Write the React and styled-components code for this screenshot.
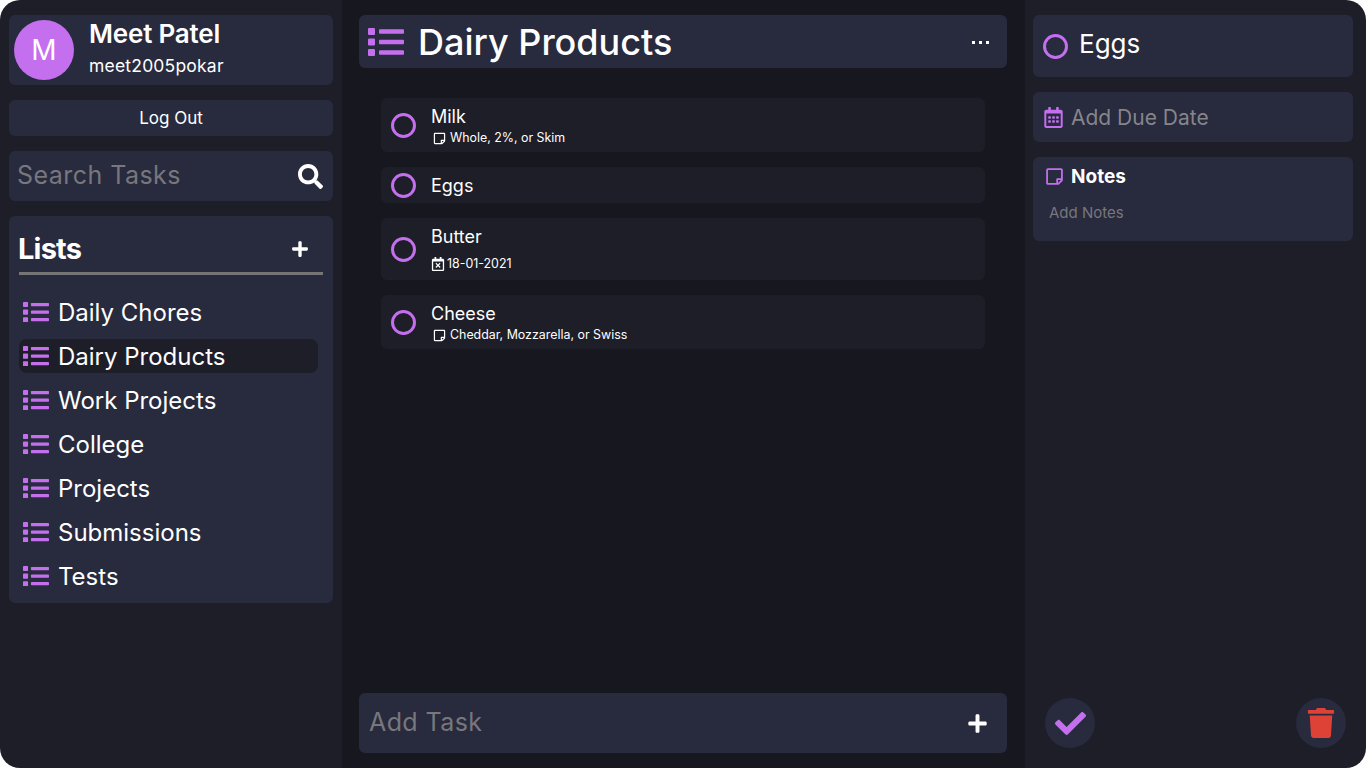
import styled, { createGlobalStyle } from "styled-components"
import { FaSearch, FaPlus, FaCheck, FaTrash, FaRegStickyNote, FaRegCalendarAlt, FaRegCalendarTimes } from "react-icons/fa"

const PURPLE = "#c36fee"
const PANEL = "#282a3e"
const SIDE = "#1e1e28"
const MAIN = "#17171f"
const MUTED = "#77777c"

const GlobalStyle = createGlobalStyle`
  html, body { margin: 0; padding: 0; background: #fff; }
  * { box-sizing: border-box; }
  body { font-family: Inter, "Noto Sans", sans-serif; color: #fff; }
`

const ListIcon = ({ size }) => (
  <ListSvg viewBox="0 0 36 28" $size={size}>
    <rect x="0" y="0" width="7" height="7" rx="1" />
    <rect x="0" y="10.5" width="7" height="7" rx="1" />
    <rect x="0" y="21" width="7" height="7" rx="1" />
    <rect x="11" y="1.25" width="25" height="4.5" rx="1" />
    <rect x="11" y="11.75" width="25" height="4.5" rx="1" />
    <rect x="11" y="22.25" width="25" height="4.5" rx="1" />
  </ListSvg>
)

const lists = ["Daily Chores", "Dairy Products", "Work Projects", "College", "Projects", "Submissions", "Tests"]

const tasks = [
  { name: "Milk", note: "Whole, 2%, or Skim" },
  { name: "Eggs" },
  { name: "Butter", date: "18-01-2021" },
  { name: "Cheese", note: "Cheddar, Mozzarella, or Swiss" },
]

export default function App() {
  return (
    <Page>
      <GlobalStyle />
      <Sidebar>
        <Profile>
          <Avatar>M</Avatar>
          <div>
            <UserName>Meet Patel</UserName>
            <UserHandle>meet2005pokar</UserHandle>
          </div>
        </Profile>
        <LogOut>Log Out</LogOut>
        <Search>
          <SearchLabel>Search Tasks</SearchLabel>
          <FaSearch size={25} />
        </Search>
        <ListsCard>
          <ListsHead>
            <ListsTitle>Lists</ListsTitle>
            <FaPlus size={18} />
          </ListsHead>
          <ListRows>
            {lists.map(l => (
              <ListRow key={l} $active={l === "Dairy Products"}>
                <ListIcon size={26} />
                {l}
              </ListRow>
            ))}
          </ListRows>
        </ListsCard>
      </Sidebar>

      <Main>
        <Header>
          <ListIcon size={36} />
          <Title>Dairy Products</Title>
          <Dots>
            <i /><i /><i />
          </Dots>
        </Header>
        <Tasks>
          {tasks.map(t => (
            <Task key={t.name}>
              <Ring />
              <TaskBody $tall={!!t.date}>
                <TaskName>{t.name}</TaskName>
                {t.note && (
                  <TaskMeta $indent>
                    <FaRegStickyNote size={13} />
                    {t.note}
                  </TaskMeta>
                )}
                {t.date && (
                  <TaskMeta $date>
                    <FaRegCalendarTimes size={14} />
                    {t.date}
                  </TaskMeta>
                )}
              </TaskBody>
            </Task>
          ))}
        </Tasks>
        <AddTask>
          <AddLabel>Add Task</AddLabel>
          <FaPlus size={21} />
        </AddTask>
      </Main>

      <Details>
        <DetailTitle>
          <Ring />
          <DetailName>Eggs</DetailName>
        </DetailTitle>
        <DueDate>
          <FaRegCalendarAlt size={21} color={PURPLE} />
          <span>Add Due Date</span>
        </DueDate>
        <Notes>
          <NotesHead>
            <FaRegStickyNote size={19} color={PURPLE} />
            <span>Notes</span>
          </NotesHead>
          <NotesHint>Add Notes</NotesHint>
        </Notes>
        <Actions>
          <RoundButton><FaCheck size={31} color={PURPLE} /></RoundButton>
          <RoundButton><FaTrash size={30} color="#de4237" /></RoundButton>
        </Actions>
      </Details>
    </Page>
  )
}

const Page = styled.div`
  width: 1366px;
  height: 768px;
  display: grid;
  grid-template-columns: 342px 683px 341px;
  border-radius: 20px;
  overflow: hidden;
`
const ListSvg = styled.svg`
  width: ${props => props.$size}px;
  flex: none;
  fill: ${PURPLE};
`
const Sidebar = styled.aside`
  background: ${SIDE};
  padding: 15px 9px;
  display: flex;
  flex-direction: column;
  gap: 15px;
`
const Card = styled.div`
  background: ${PANEL};
  border-radius: 6px;
`
const Profile = styled(Card)`
  height: 70px;
  display: flex;
  align-items: center;
  gap: 15px;
  padding-left: 5px;
`
const Avatar = styled.div`
  width: 60px;
  height: 60px;
  border-radius: 50%;
  background: ${PURPLE};
  display: flex;
  align-items: center;
  justify-content: center;
  font-size: 28px;
`
const UserName = styled.div`
  font-size: 26px;
  font-weight: 600;
  line-height: 36px;
  margin: -5px 0 1px;
  letter-spacing: -0.2px;
`
const UserHandle = styled.div`
  font-size: 17.5px;
  line-height: 26px;
  letter-spacing: 0.2px;
`
const LogOut = styled(Card)`
  height: 36px;
  display: flex;
  align-items: center;
  justify-content: center;
  font-size: 17px;
`
const Search = styled(Card)`
  height: 50px;
  display: flex;
  align-items: center;
  justify-content: space-between;
  padding: 0 10px 0 8px;
`
const SearchLabel = styled.span`
  font-size: 25px;
  color: ${MUTED};
  letter-spacing: 0.45px;
  margin-bottom: 2px;
`
const ListsCard = styled(Card)`
  padding: 10px;
`
const ListsHead = styled.div`
  display: flex;
  align-items: center;
  justify-content: space-between;
  height: 49px;
  border-bottom: 3px solid #757575;
  padding-right: 14px;
`
const ListsTitle = styled.span`
  font-size: 29px;
  font-weight: 700;
  letter-spacing: -0.8px;
  margin: 0 0 2px -1px;
`
const ListRows = styled.div`
  display: flex;
  flex-direction: column;
  gap: 10px;
  margin-top: 20px;
  padding-right: 5px;
`
const ListRow = styled.div`
  height: 34px;
  display: flex;
  align-items: center;
  gap: 9px;
  padding-left: 4px;
  border-radius: 8px;
  font-size: 24px;
  background: ${props => (props.$active ? SIDE : "transparent")};
`
const Main = styled.main`
  background: ${MAIN};
  padding: 15px 18px 15px 17px;
  display: flex;
  flex-direction: column;
`
const Header = styled(Card)`
  height: 53px;
  display: flex;
  align-items: center;
  gap: 14px;
  padding: 0 18px 0 9px;
`
const Title = styled.h1`
  flex: 1;
  margin: 0;
  font-size: 36px;
  font-weight: 500;
`
const Dots = styled.div`
  display: flex;
  gap: 4px;
  margin-top: 2px;
  i {
    width: 3px;
    height: 3px;
    background: #fff;
  }
`
const Tasks = styled.div`
  flex: 1;
  display: flex;
  flex-direction: column;
  gap: 15px;
  padding: 30px 22px 0;
`
const Task = styled.div`
  background: ${SIDE};
  border-radius: 6px;
  padding: 0 10px;
  display: flex;
  align-items: center;
  gap: 15px;
`
const TaskBody = styled.div`
  padding: ${props => (props.$tall ? "7px 0" : "7px 0 5px")};
`
const Ring = styled.span`
  width: 25px;
  height: 25px;
  flex: none;
  border-radius: 50%;
  border: 3px solid ${PURPLE};
`
const TaskName = styled.div`
  font-size: 18px;
  line-height: 24px;
`
const TaskMeta = styled.div`
  font-size: 12.4px;
  line-height: 18px;
  display: flex;
  align-items: center;
  gap: ${props => (props.$date ? "2px" : "4px")};
  padding-left: ${props => (props.$indent ? "2px" : "0")};
  margin-top: ${props => (props.$date ? "6px" : "0")};
`
const AddTask = styled(Card)`
  height: 60px;
  display: flex;
  align-items: center;
  justify-content: space-between;
  padding: 0 19px 0 10px;
`
const AddLabel = styled.span`
  font-size: 25px;
  color: ${MUTED};
  letter-spacing: 0.4px;
  margin-bottom: 2px;
`
const Details = styled.section`
  background: ${SIDE};
  padding: 15px 13px 20px 8px;
  display: flex;
  flex-direction: column;
  gap: 15px;
`
const DetailTitle = styled(Card)`
  height: 62px;
  display: flex;
  align-items: center;
  gap: 11px;
  padding-left: 10px;
  font-size: 26px;
`
const DetailName = styled.span`
  margin-bottom: 6px;
`
const DueDate = styled(Card)`
  height: 50px;
  display: flex;
  align-items: center;
  gap: 7px;
  padding-left: 10px;
  font-size: 21px;
  color: #85858a;
`
const Notes = styled(Card)`
  height: 84px;
  padding: 8px 12px;
`
const NotesHead = styled.div`
  display: flex;
  align-items: center;
  gap: 7px;
  font-size: 19px;
  font-weight: 700;
`
const NotesHint = styled.div`
  font-size: 15px;
  color: ${MUTED};
  margin: 15px 0 0 4px;
`
const Actions = styled.div`
  margin-top: auto;
  display: flex;
  justify-content: space-between;
  padding: 0 7px 0 12px;
`
const RoundButton = styled.div`
  width: 50px;
  height: 50px;
  border-radius: 50%;
  background: ${PANEL};
  display: flex;
  align-items: center;
  justify-content: center;
`
